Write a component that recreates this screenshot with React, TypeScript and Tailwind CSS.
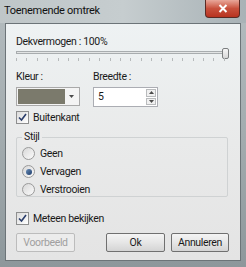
import React from "react";

const font = { fontFamily: 'Roboto, "Noto Sans", sans-serif' };

function CheckBox({ label }: { label: string }) {
  return (
    <div className="flex h-[15px] items-center gap-[4px]">
      <span className="flex h-[13px] w-[13px] items-center justify-center border border-[#8e8f8f] bg-gradient-to-br from-[#dcdcdc] to-[#ffffff]">
        <svg width="9" height="9" viewBox="0 0 9 9">
          <path d="M1 4.5 L3.5 7 L8 1" fill="none" stroke="#2a3d6b" strokeWidth="1.6" />
        </svg>
      </span>
      <span className="text-[10.5px] leading-[15px] tracking-[-0.35px] text-[#1a1a1a]">{label}</span>
    </div>
  );
}

function Radio({ label, checked }: { label: string; checked?: boolean }) {
  return (
    <div className="flex h-[15px] items-center gap-[5px]">
      <span className="flex h-[13px] w-[13px] items-center justify-center rounded-full border border-[#9a9a9a] bg-gradient-to-br from-[#d8d8d8] to-[#fbfbfb]">
        {checked && <span className="h-[6px] w-[6px] rounded-full bg-gradient-to-br from-[#6b8fb8] to-[#1d3b6a]" />}
      </span>
      <span className="text-[10.5px] leading-[15px] tracking-[-0.35px] text-[#1a1a1a]">{label}</span>
    </div>
  );
}

function Button({ label, disabled, className }: { label: string; disabled?: boolean; className: string }) {
  return (
    <div
      className={`flex h-[19px] items-center justify-center rounded-[2px] border text-[10.5px] tracking-[-0.35px] ${
        disabled
          ? "border-[#bcbcbc] bg-[#ececec] text-[#a0a0a0]"
          : "border-[#707070] bg-gradient-to-b from-[#f4f4f4] via-[#e6e6e6] to-[#d4d4d4] text-[#1a1a1a]"
      } ${className}`}
    >
      {label}
    </div>
  );
}

export default function App() {
  const ticks = Array.from({ length: 21 }, (_, i) => i);
  return (
    <div style={font} className="flex h-[267px] w-[246px] flex-col bg-gradient-to-b from-[#b4bcbf] via-[#a3acaf] to-[#8d979b]">
      <div className="relative flex h-[23px] items-center bg-gradient-to-r from-[#bfc6c8] via-[#c6cdcf] to-[#a8b2b6] pl-[4px]">
        <span className="text-[11px] tracking-[-0.3px] text-[#111]">Toenemende omtrek</span>
        <div className="absolute right-[6px] top-0 flex h-[18px] w-[35px] items-center justify-center rounded-b-[4px] border border-t-0 border-[#5a2a24] bg-gradient-to-b from-[#e8a79a] via-[#c8503c] to-[#b8321f]">
          <svg width="10" height="9" viewBox="0 0 10 9">
            <path d="M1.5 1 L8.5 8 M8.5 1 L1.5 8" stroke="#ffffff" strokeWidth="2" />
          </svg>
        </div>
      </div>
      <div className="mx-[5px] mb-[6px] flex-1 border border-[#6c7478] bg-gradient-to-b from-[#eef2f3] via-[#e9eaea] to-[#e4e4e4] pl-[10px] pr-[11px]">
        <div className="mt-[12px] text-[10.5px] leading-[12px] tracking-[-0.35px] text-[#1a1a1a]">Dekvermogen : 100%</div>
        <div className="relative h-[13px] w-[213px]">
          <div className="absolute left-0 right-[4px] top-[3px] h-[3px] border border-[#a8acae] bg-[#e2e4e4]" />
          <div className="absolute right-0 top-0 h-[11px] w-[7px] rounded-[2px] border border-[#7c7f80] bg-gradient-to-b from-[#f6f6f6] to-[#d8d8d8]" />
          <div className="absolute bottom-0 left-0 flex w-[209px] justify-between">
            {ticks.map((t) => (
              <span key={t} className="h-[3px] w-px bg-[#b6b9ba]" />
            ))}
          </div>
        </div>
        <div className="mt-[9px] flex gap-[13px]">
          <div>
            <div className="text-[10.5px] leading-[14px] tracking-[-0.35px] text-[#1a1a1a]">Kleur :</div>
            <div className="mt-[3px] flex h-[19px] w-[64px] border border-[#a9a9a9] bg-[#f4f4f4] p-px">
              <div className="flex-1 bg-[#7b7a6c]" />
              <div className="flex w-[13px] items-center justify-center">
                <svg width="5" height="3" viewBox="0 0 5 3">
                  <path d="M0 0 L5 0 L2.5 3 Z" fill="#4a4a4a" />
                </svg>
              </div>
            </div>
          </div>
          <div>
            <div className="text-[10.5px] leading-[14px] tracking-[-0.35px] text-[#1a1a1a]">Breedte :</div>
            <div className="mt-[3px] flex h-[20px] w-[65px] items-center border border-[#abadb3] bg-white pl-[4px]">
              <span className="flex-1 text-[10.5px] text-[#1a1a1a]">5</span>
              <div className="flex h-full w-[11px] flex-col gap-px py-px pr-px">
                <div className="flex flex-1 items-center justify-center border border-[#b9bbbd] bg-[#f0f0f0]">
                  <svg width="5" height="3" viewBox="0 0 5 3">
                    <path d="M0 3 L5 3 L2.5 0 Z" fill="#4a4a4a" />
                  </svg>
                </div>
                <div className="flex flex-1 items-center justify-center border border-[#b9bbbd] bg-[#f0f0f0]">
                  <svg width="5" height="3" viewBox="0 0 5 3">
                    <path d="M0 0 L5 0 L2.5 3 Z" fill="#4a4a4a" />
                  </svg>
                </div>
              </div>
            </div>
          </div>
        </div>
        <div className="mt-[3px]">
          <CheckBox label="Buitenkant" />
        </div>
        <div className="relative mt-[12px] h-[60px] w-[212px] rounded-[2px] border border-[#cfd2d3]">
          <span className="absolute left-[5px] top-[-8px] bg-[#ebebeb] px-[2px] text-[10.5px] leading-[14px] tracking-[-0.35px] text-[#1a1a1a]">
            Stijl
          </span>
          <div className="flex flex-col gap-[3px] pl-[5px] pt-[8px]">
            <Radio label="Geen" />
            <Radio label="Vervagen" checked />
            <Radio label="Verstrooien" />
          </div>
        </div>
        <div className="mt-[14px]">
          <CheckBox label="Meteen bekijken" />
        </div>
        <div className="mt-[7px] flex">
          <Button label="Voorbeeld" disabled className="w-[59px]" />
          <Button label="Ok" className="ml-[31px] w-[59px]" />
          <Button label="Annuleren" className="ml-[6px] w-[58px]" />
        </div>
      </div>
    </div>
  );
}
